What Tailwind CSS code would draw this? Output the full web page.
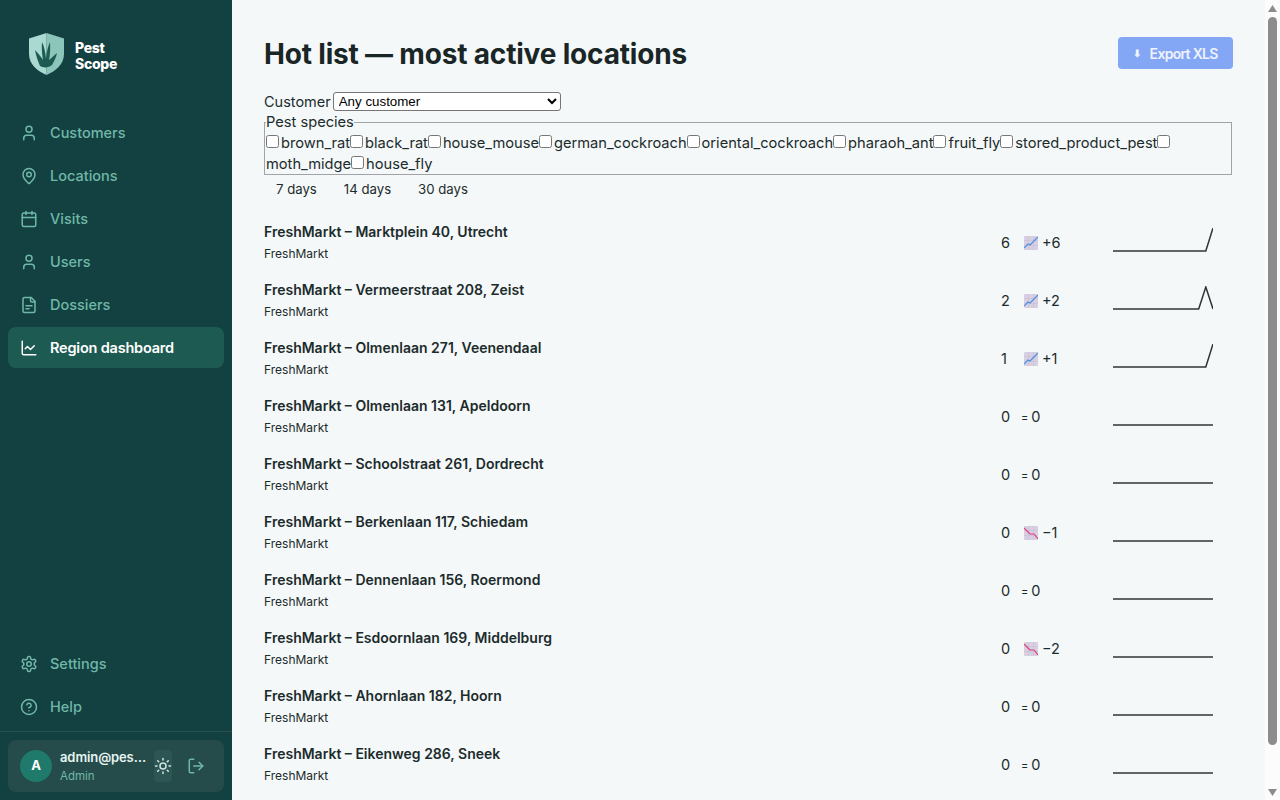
<!DOCTYPE html>
<html>
  <head>
    <meta charset="utf-8" />
    <title>Pest Scope | Hot list</title>
    <script src="https://cdn.jsdelivr.net/npm/@tailwindcss/browser@4"></script>
  </head>

  <body class="font-['Inter',sans-serif] text-[#1c2b2b]">
    <div class="flex h-screen overflow-hidden bg-[#f4f8f9]">
      <!-- Sidebar -->
      <aside class="w-[232px] shrink-0 h-full bg-[#134040] flex flex-col">
        <div class="h-[112px] pl-[28px] pt-[33px] flex items-start gap-[10px]">
          <svg class="w-[37px] h-[42px]" viewBox="0 0 37 42">
            <path d="M18.5 0 L36 5.5 V21 C36 31 28 38 18.5 42 Z" fill="#8cc5ba" />
            <path d="M18.5 0 L1 5.5 V21 C1 31 9 38 18.5 42 Z" fill="#a9d9d0" />
            <path d="M12 33 C10 28 8 23 7 17 C10 20 13 24 15 27 C14 21 13.5 15 14 9 C16 13 17.5 19 18 26 C18.5 19 20 14 22 9 C22.5 15 22 22 21 27 C24 25 26 22 29 20 C28 25 26 28 24 32 C21 35 15 35 12 33 Z" fill="#1d5b52" />
          </svg>
          <div class="font-extrabold text-[14px] tracking-[-0.3px] leading-[16px] text-white mt-[7px]">Pest<br />Scope</div>
        </div>
        <nav class="flex flex-col gap-[2px] px-2 text-[14.5px] font-medium text-[#6fb8a8]">
          <a class="h-[41px] flex items-center gap-3 px-3">
            <svg class="w-[18px] h-[18px]" viewBox="0 0 24 24" fill="none" stroke="currentColor" stroke-width="2" stroke-linecap="round" stroke-linejoin="round"><circle cx="12" cy="7" r="4" /><path d="M19 21v-2a4 4 0 0 0-4-4H9a4 4 0 0 0-4 4v2" /></svg>
            Customers
          </a>
          <a class="h-[41px] flex items-center gap-3 px-3">
            <svg class="w-[18px] h-[18px]" viewBox="0 0 24 24" fill="none" stroke="currentColor" stroke-width="2" stroke-linecap="round" stroke-linejoin="round"><path d="M20 10c0 5-5.5 10.2-7.4 11.8a1 1 0 0 1-1.2 0C9.5 20.2 4 15 4 10a8 8 0 0 1 16 0" /><circle cx="12" cy="10" r="3" /></svg>
            Locations
          </a>
          <a class="h-[41px] flex items-center gap-3 px-3">
            <svg class="w-[18px] h-[18px]" viewBox="0 0 24 24" fill="none" stroke="currentColor" stroke-width="2" stroke-linecap="round" stroke-linejoin="round"><path d="M8 2v4" /><path d="M16 2v4" /><rect x="3" y="4" width="18" height="18" rx="2" /><path d="M3 10h18" /></svg>
            Visits
          </a>
          <a class="h-[41px] flex items-center gap-3 px-3">
            <svg class="w-[18px] h-[18px]" viewBox="0 0 24 24" fill="none" stroke="currentColor" stroke-width="2" stroke-linecap="round" stroke-linejoin="round"><circle cx="12" cy="7" r="4" /><path d="M19 21v-2a4 4 0 0 0-4-4H9a4 4 0 0 0-4 4v2" /></svg>
            Users
          </a>
          <a class="h-[41px] flex items-center gap-3 px-3">
            <svg class="w-[18px] h-[18px]" viewBox="0 0 24 24" fill="none" stroke="currentColor" stroke-width="2" stroke-linecap="round" stroke-linejoin="round"><path d="M15 2H6a2 2 0 0 0-2 2v16a2 2 0 0 0 2 2h12a2 2 0 0 0 2-2V7Z" /><path d="M14 2v4a2 2 0 0 0 2 2h4" /><path d="M16 13H8" /><path d="M12 17H8" /></svg>
            Dossiers
          </a>
          <a class="h-[41px] flex items-center gap-3 px-3 rounded-lg bg-[#1d5b52] text-white font-semibold tracking-[-0.2px]">
            <svg class="w-[18px] h-[18px]" viewBox="0 0 24 24" fill="none" stroke="currentColor" stroke-width="2" stroke-linecap="round" stroke-linejoin="round"><path d="M3 3v16a2 2 0 0 0 2 2h16" /><path d="m19 9-5 5-4-4-3 3" /></svg>
            Region dashboard
          </a>
        </nav>
        <nav class="mt-auto flex flex-col gap-[2px] px-2 pb-[4px] text-[14.5px] font-medium text-[#6fb8a8]">
          <a class="h-[41px] flex items-center gap-3 px-3">
            <svg class="w-[18px] h-[18px]" viewBox="0 0 24 24" fill="none" stroke="currentColor" stroke-width="2" stroke-linecap="round" stroke-linejoin="round"><path d="M12.22 2h-.44a2 2 0 0 0-2 2v.18a2 2 0 0 1-1 1.73l-.43.25a2 2 0 0 1-2 0l-.15-.08a2 2 0 0 0-2.73.73l-.22.38a2 2 0 0 0 .73 2.73l.15.1a2 2 0 0 1 1 1.72v.51a2 2 0 0 1-1 1.74l-.15.09a2 2 0 0 0-.73 2.73l.22.38a2 2 0 0 0 2.73.73l.15-.08a2 2 0 0 1 2 0l.43.25a2 2 0 0 1 1 1.73V20a2 2 0 0 0 2 2h.44a2 2 0 0 0 2-2v-.18a2 2 0 0 1 1-1.73l.43-.25a2 2 0 0 1 2 0l.15.08a2 2 0 0 0 2.73-.73l.22-.39a2 2 0 0 0-.73-2.73l-.15-.08a2 2 0 0 1-1-1.74v-.5a2 2 0 0 1 1-1.74l.15-.09a2 2 0 0 0 .73-2.73l-.22-.38a2 2 0 0 0-2.73-.73l-.15.08a2 2 0 0 1-2 0l-.43-.25a2 2 0 0 1-1-1.73V4a2 2 0 0 0-2-2z" /><circle cx="12" cy="12" r="3" /></svg>
            Settings
          </a>
          <a class="h-[41px] flex items-center gap-3 px-3">
            <svg class="w-[18px] h-[18px]" viewBox="0 0 24 24" fill="none" stroke="currentColor" stroke-width="2" stroke-linecap="round" stroke-linejoin="round"><circle cx="12" cy="12" r="10" /><path d="M9.09 9a3 3 0 0 1 5.83 1c0 2-3 3-3 3" /><path d="M12 17h.01" /></svg>
            Help
          </a>
        </nav>
        <div class="border-t border-[#255150] h-[69px] pt-2 px-2">
          <div class="h-[52px] rounded-lg bg-[#254c4b] flex items-center pl-3">
            <div class="w-8 h-8 rounded-full bg-[#1f7a6b] text-white text-[13px] font-bold flex items-center justify-center shrink-0">A</div>
            <div class="w-[84px] ml-2 shrink-0">
              <div class="text-[13px] tracking-[-0.1px] font-semibold leading-[18px] text-[#e6f4f1] whitespace-nowrap">admin@pes…</div>
              <div class="text-[11.5px] leading-[16px] mt-[2px] text-[#6fb8a8]">Admin</div>
            </div>
            <div class="w-[18px] h-8 ml-[10px] rounded bg-[#2c5554] flex items-center justify-center shrink-0 text-[#cfe5e0]">
              <svg class="w-[18px] h-[18px] shrink-0" viewBox="0 0 24 24" fill="none" stroke="currentColor" stroke-width="2" stroke-linecap="round" stroke-linejoin="round"><circle cx="12" cy="12" r="4" /><path d="M12 2v2" /><path d="M12 20v2" /><path d="m4.93 4.93 1.41 1.41" /><path d="m17.66 17.66 1.41 1.41" /><path d="M2 12h2" /><path d="M20 12h2" /><path d="m6.34 17.66-1.41 1.41" /><path d="m19.07 4.93-1.41 1.41" /></svg>
            </div>
            <svg class="w-[18px] h-[18px] ml-[15px] shrink-0 text-[#6fb8a8]" viewBox="0 0 24 24" fill="none" stroke="currentColor" stroke-width="2" stroke-linecap="round" stroke-linejoin="round"><path d="M9 21H5a2 2 0 0 1-2-2V5a2 2 0 0 1 2-2h4" /><path d="m16 17 5-5-5-5" /><path d="M21 12H9" /></svg>
          </div>
        </div>
      </aside>

      <!-- Main content -->
      <main class="flex-1 h-full overflow-hidden px-8 pt-[37px]">
        <div class="flex items-center justify-between h-[32px] mb-[23px]">
          <h1 class="text-[28px] font-bold tracking-[-0.18px] text-[#1a2626] mt-[2px]">Hot list — most active locations</h1>
          <button class="w-[115px] h-8 rounded bg-[#84a7f5] text-[#eef3fe] text-[14px] font-semibold tracking-[-0.7px] flex items-center justify-center gap-[9px]"><span class="text-[10px]">⬇</span>Export XLS</button>
        </div>

        <div class="text-[14.5px] leading-[18px] flex items-center gap-[2px]">
          <label>Customer</label>
          <select class="w-[228px] h-[19px] pl-[1px] bg-white border border-[#767676] rounded-[3px] text-black text-[13.33px] font-['Liberation_Sans',sans-serif]">
            <option>Any customer</option>
          </select>
        </div>

        <fieldset class="mt-[2px] mr-[1px] border border-[#a0a4a6] pl-[1px] pr-[1px] text-[14.65px] leading-[21px] h-[62px]">
          <legend class="leading-[18px]">Pest species</legend>
          <div class="mt-[2px]">
            <label><input type="checkbox" class="mr-[2px]" />brown_rat</label><label><input type="checkbox" class="mr-[2px]" />black_rat</label><label><input type="checkbox" class="mr-[2px]" />house_mouse</label><label><input type="checkbox" class="mr-[2px]" />german_cockroach</label><label><input type="checkbox" class="mr-[2px]" />oriental_cockroach</label><label><input type="checkbox" class="mr-[2px]" />pharaoh_ant</label><label><input type="checkbox" class="mr-[2px]" />fruit_fly</label><label><input type="checkbox" class="mr-[2px]" />stored_product_pest</label><label><input type="checkbox" class="mr-[2px]" />moth_midge</label><label><input type="checkbox" class="mr-[2px]" />house_fly</label>
          </div>
        </fieldset>

        <div class="flex gap-[3px] mt-[3px] mb-[12px] text-[13.2px] leading-[22px]">
          <button class="px-3">7 days</button>
          <button class="px-3">14 days</button>
          <button class="px-3">30 days</button>
        </div>

        <div class="flex flex-col">
          <div class="h-[58px] flex items-center">
            <div class="flex-1 mt-[2px]">
              <div class="text-[14px] font-semibold leading-[20px]">FreshMarkt – Marktplein 40, Utrecht</div>
              <div class="text-[12px] leading-[16px] mt-[4px]">FreshMarkt</div>
            </div>
            <div class="w-[15px] pl-[2px] text-[14.5px] mt-[4px]">6</div>
            <div class="w-[89px] ml-[10px] flex items-center gap-[4px] text-[14.5px] mt-[4px]">
              <svg class="w-[14px] h-[14px]" viewBox="0 0 14 14"><rect width="14" height="14" rx="1" fill="#d8d0e2" /><path d="M0 4.5h14M0 9.5h14M4.5 0v14M9.5 0v14" stroke="#c6bdd4" stroke-width=".6" /><path d="M0 12 L4 8 L6 9 L10 5 L14 1" fill="none" stroke="#4a90e2" stroke-width="1.2" /></svg>
              +6
            </div>
            <svg class="w-[100px] h-[24px] mb-[2px] mr-[20px] overflow-hidden" viewBox="0 0 100 24" fill="none" stroke="#333" stroke-width="1.5"><polyline points="0,23 92.8,23 100,0" /></svg>
          </div>
          <div class="h-[58px] flex items-center">
            <div class="flex-1 mt-[2px]">
              <div class="text-[14px] font-semibold leading-[20px]">FreshMarkt – Vermeerstraat 208, Zeist</div>
              <div class="text-[12px] leading-[16px] mt-[4px]">FreshMarkt</div>
            </div>
            <div class="w-[15px] pl-[2px] text-[14.5px] mt-[4px]">2</div>
            <div class="w-[89px] ml-[10px] flex items-center gap-[4px] text-[14.5px] mt-[4px]">
              <svg class="w-[14px] h-[14px]" viewBox="0 0 14 14"><rect width="14" height="14" rx="1" fill="#d8d0e2" /><path d="M0 4.5h14M0 9.5h14M4.5 0v14M9.5 0v14" stroke="#c6bdd4" stroke-width=".6" /><path d="M0 12 L4 8 L6 9 L10 5 L14 1" fill="none" stroke="#4a90e2" stroke-width="1.2" /></svg>
              +2
            </div>
            <svg class="w-[100px] h-[24px] mb-[2px] mr-[20px] overflow-hidden" viewBox="0 0 100 24" fill="none" stroke="#333" stroke-width="1.5"><polyline points="0,23 85.7,23 92.8,1 100,23" /></svg>
          </div>
          <div class="h-[58px] flex items-center">
            <div class="flex-1 mt-[2px]">
              <div class="text-[14px] font-semibold leading-[20px]">FreshMarkt – Olmenlaan 271, Veenendaal</div>
              <div class="text-[12px] leading-[16px] mt-[4px]">FreshMarkt</div>
            </div>
            <div class="w-[15px] pl-[2px] text-[14.5px] mt-[4px]">1</div>
            <div class="w-[89px] ml-[10px] flex items-center gap-[4px] text-[14.5px] mt-[4px]">
              <svg class="w-[14px] h-[14px]" viewBox="0 0 14 14"><rect width="14" height="14" rx="1" fill="#d8d0e2" /><path d="M0 4.5h14M0 9.5h14M4.5 0v14M9.5 0v14" stroke="#c6bdd4" stroke-width=".6" /><path d="M0 12 L4 8 L6 9 L10 5 L14 1" fill="none" stroke="#4a90e2" stroke-width="1.2" /></svg>
              +1
            </div>
            <svg class="w-[100px] h-[24px] mb-[2px] mr-[20px] overflow-hidden" viewBox="0 0 100 24" fill="none" stroke="#333" stroke-width="1.5"><polyline points="0,23 92.8,23 100,0" /></svg>
          </div>
          <div class="h-[58px] flex items-center">
            <div class="flex-1 mt-[2px]">
              <div class="text-[14px] font-semibold leading-[20px]">FreshMarkt – Olmenlaan 131, Apeldoorn</div>
              <div class="text-[12px] leading-[16px] mt-[4px]">FreshMarkt</div>
            </div>
            <div class="w-[15px] pl-[2px] text-[14.5px] mt-[4px]">0</div>
            <div class="w-[89px] ml-[7px] flex items-center gap-[3px] text-[14.5px] mt-[4px]"><span class="text-[11px]">=</span>0</div>
            <svg class="w-[100px] h-[24px] mb-[2px] mr-[20px] ml-[3px]" viewBox="0 0 100 24" fill="none" stroke="#333" stroke-width="1.5"><polyline points="0,23 100,23" /></svg>
          </div>
          <div class="h-[58px] flex items-center">
            <div class="flex-1 mt-[2px]">
              <div class="text-[14px] font-semibold leading-[20px]">FreshMarkt – Schoolstraat 261, Dordrecht</div>
              <div class="text-[12px] leading-[16px] mt-[4px]">FreshMarkt</div>
            </div>
            <div class="w-[15px] pl-[2px] text-[14.5px] mt-[4px]">0</div>
            <div class="w-[89px] ml-[7px] flex items-center gap-[3px] text-[14.5px] mt-[4px]"><span class="text-[11px]">=</span>0</div>
            <svg class="w-[100px] h-[24px] mb-[2px] mr-[20px] ml-[3px]" viewBox="0 0 100 24" fill="none" stroke="#333" stroke-width="1.5"><polyline points="0,23 100,23" /></svg>
          </div>
          <div class="h-[58px] flex items-center">
            <div class="flex-1 mt-[2px]">
              <div class="text-[14px] font-semibold leading-[20px]">FreshMarkt – Berkenlaan 117, Schiedam</div>
              <div class="text-[12px] leading-[16px] mt-[4px]">FreshMarkt</div>
            </div>
            <div class="w-[15px] pl-[2px] text-[14.5px] mt-[4px]">0</div>
            <div class="w-[89px] ml-[10px] flex items-center gap-[4px] text-[14.5px] mt-[4px]">
              <svg class="w-[14px] h-[14px]" viewBox="0 0 14 14"><rect width="14" height="14" rx="1" fill="#d8d0e2" /><path d="M0 4.5h14M0 9.5h14M4.5 0v14M9.5 0v14" stroke="#c6bdd4" stroke-width=".6" /><path d="M0 2 L4 6 L6 8 L10 8 L14 13" fill="none" stroke="#e0407a" stroke-width="1.2" /></svg>
              −1
            </div>
            <svg class="w-[100px] h-[24px] mb-[2px] mr-[20px]" viewBox="0 0 100 24" fill="none" stroke="#333" stroke-width="1.5"><polyline points="0,23 100,23" /></svg>
          </div>
          <div class="h-[58px] flex items-center">
            <div class="flex-1 mt-[2px]">
              <div class="text-[14px] font-semibold leading-[20px]">FreshMarkt – Dennenlaan 156, Roermond</div>
              <div class="text-[12px] leading-[16px] mt-[4px]">FreshMarkt</div>
            </div>
            <div class="w-[15px] pl-[2px] text-[14.5px] mt-[4px]">0</div>
            <div class="w-[89px] ml-[7px] flex items-center gap-[3px] text-[14.5px] mt-[4px]"><span class="text-[11px]">=</span>0</div>
            <svg class="w-[100px] h-[24px] mb-[2px] mr-[20px] ml-[3px]" viewBox="0 0 100 24" fill="none" stroke="#333" stroke-width="1.5"><polyline points="0,23 100,23" /></svg>
          </div>
          <div class="h-[58px] flex items-center">
            <div class="flex-1 mt-[2px]">
              <div class="text-[14px] font-semibold leading-[20px]">FreshMarkt – Esdoornlaan 169, Middelburg</div>
              <div class="text-[12px] leading-[16px] mt-[4px]">FreshMarkt</div>
            </div>
            <div class="w-[15px] pl-[2px] text-[14.5px] mt-[4px]">0</div>
            <div class="w-[89px] ml-[10px] flex items-center gap-[4px] text-[14.5px] mt-[4px]">
              <svg class="w-[14px] h-[14px]" viewBox="0 0 14 14"><rect width="14" height="14" rx="1" fill="#d8d0e2" /><path d="M0 4.5h14M0 9.5h14M4.5 0v14M9.5 0v14" stroke="#c6bdd4" stroke-width=".6" /><path d="M0 2 L4 6 L6 8 L10 8 L14 13" fill="none" stroke="#e0407a" stroke-width="1.2" /></svg>
              −2
            </div>
            <svg class="w-[100px] h-[24px] mb-[2px] mr-[20px]" viewBox="0 0 100 24" fill="none" stroke="#333" stroke-width="1.5"><polyline points="0,23 100,23" /></svg>
          </div>
          <div class="h-[58px] flex items-center">
            <div class="flex-1 mt-[2px]">
              <div class="text-[14px] font-semibold leading-[20px]">FreshMarkt – Ahornlaan 182, Hoorn</div>
              <div class="text-[12px] leading-[16px] mt-[4px]">FreshMarkt</div>
            </div>
            <div class="w-[15px] pl-[2px] text-[14.5px] mt-[4px]">0</div>
            <div class="w-[89px] ml-[7px] flex items-center gap-[3px] text-[14.5px] mt-[4px]"><span class="text-[11px]">=</span>0</div>
            <svg class="w-[100px] h-[24px] mb-[2px] mr-[20px] ml-[3px]" viewBox="0 0 100 24" fill="none" stroke="#333" stroke-width="1.5"><polyline points="0,23 100,23" /></svg>
          </div>
          <div class="h-[58px] flex items-center">
            <div class="flex-1 mt-[2px]">
              <div class="text-[14px] font-semibold leading-[20px]">FreshMarkt – Eikenweg 286, Sneek</div>
              <div class="text-[12px] leading-[16px] mt-[4px]">FreshMarkt</div>
            </div>
            <div class="w-[15px] pl-[2px] text-[14.5px] mt-[4px]">0</div>
            <div class="w-[89px] ml-[7px] flex items-center gap-[3px] text-[14.5px] mt-[4px]"><span class="text-[11px]">=</span>0</div>
            <svg class="w-[100px] h-[24px] mb-[2px] mr-[20px] ml-[3px]" viewBox="0 0 100 24" fill="none" stroke="#333" stroke-width="1.5"><polyline points="0,23 100,23" /></svg>
          </div>
        </div>
      </main>

      <!-- Scrollbar -->
      <div class="w-[15px] shrink-0 h-full bg-[#fcfcfc] flex flex-col items-center pt-[5px] pb-[4px]">
        <svg class="w-[9px] h-[7px] shrink-0" viewBox="0 0 9 7"><path d="M4.5 0 L9 7 H0 Z" fill="#8c8c8c" /></svg>
        <div class="w-[9px] h-[728px] mt-[5px] rounded-full bg-[#8c8c8c]"></div>
        <svg class="w-[9px] h-[7px] mt-auto shrink-0" viewBox="0 0 9 7"><path d="M4.5 7 L9 0 H0 Z" fill="#8c8c8c" /></svg>
      </div>
    </div>
  </body>
</html>
